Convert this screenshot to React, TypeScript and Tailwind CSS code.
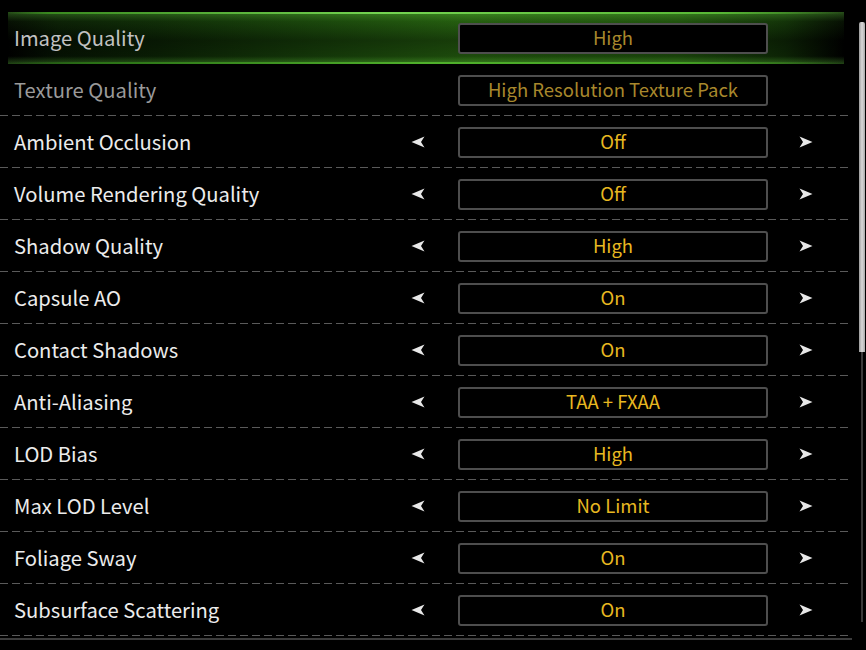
import React from 'react';

type Row = { label: string; value: string; locked?: boolean };

const rows: Row[] = [
  { label: 'Image Quality', value: 'High', locked: true },
  { label: 'Texture Quality', value: 'High Resolution Texture Pack', locked: true },
  { label: 'Ambient Occlusion', value: 'Off' },
  { label: 'Volume Rendering Quality', value: 'Off' },
  { label: 'Shadow Quality', value: 'High' },
  { label: 'Capsule AO', value: 'On' },
  { label: 'Contact Shadows', value: 'On' },
  { label: 'Anti-Aliasing', value: 'TAA + FXAA' },
  { label: 'LOD Bias', value: 'High' },
  { label: 'Max LOD Level', value: 'No Limit' },
  { label: 'Foliage Sway', value: 'On' },
  { label: 'Subsurface Scattering', value: 'On' },
];

function Arrow({ dir }: { dir: 'left' | 'right' }) {
  return (
    <svg width="14" height="12" viewBox="0 0 14 12" className={dir === 'left' ? 'rotate-180' : ''}>
      <path d="M0.5 0.5 L13.5 6 L0.5 11.5 L4 6 Z" fill="#e8e8e8" />
    </svg>
  );
}

function SettingRow({ row, selected }: { row: Row; selected: boolean }) {
  return (
    <div className="relative h-[52px]">
      {selected && (
        <div className="absolute inset-x-[8px] top-0 bottom-0 bg-[linear-gradient(90deg,#000_0%,#061403_6%,#0b2205_18%,#17400a_38%,#22580e_55%,#1d4c0c_80%,#0e2806_93%,#000_100%)]">
          <div className="absolute inset-0 bg-[linear-gradient(180deg,rgba(110,220,70,0.35)_0%,rgba(60,140,30,0.12)_18%,rgba(0,0,0,0.3)_55%,rgba(0,0,0,0.15)_85%,rgba(110,220,70,0.3)_100%)]" />
          <div className="absolute inset-x-0 top-0 h-[2px] bg-[linear-gradient(90deg,transparent_0%,#3a8a20_5%,#74d452_45%,#58b836_85%,transparent_100%)]" />
          <div className="absolute inset-x-0 bottom-0 h-[2px] bg-[linear-gradient(90deg,transparent_0%,#2a7016_10%,#50b02c_50%,#44a024_80%,transparent_100%)]" />
        </div>
      )}
      <div className="relative flex h-full items-center">
        <div
          className={
            'w-[398px] pl-[14px] text-[20.2px] ' +
            (row.locked ? (selected ? 'text-[#c2c2c2]' : 'text-[#9a9a9a]') : 'text-[#ececec]')
          }
        >
          {row.label}
        </div>
        <div className="flex w-[40px] justify-center">{!row.locked && <Arrow dir="left" />}</div>
        <div className="ml-[20px] flex h-[31px] w-[310px] items-center justify-center rounded-[3px] border-2 border-[#4e4e4e] bg-black">
          <span
            className={
              'text-[18.5px] ' + (row.locked ? 'text-[#a8882c]' : 'text-[#e8b820]')
            }
          >
            {row.value}
          </span>
        </div>
        <div className="flex w-[76px] justify-center">{!row.locked && <Arrow dir="right" />}</div>
      </div>
      {!selected && (
        <div className="absolute bottom-0 left-0 right-0 h-px bg-[repeating-linear-gradient(90deg,#5a5a5a_0_8px,transparent_8px_12px)]" />
      )}
    </div>
  );
}

export default function App() {
  return (
    <div
      className="relative h-[650px] w-[866px] overflow-hidden bg-black"
      style={{ fontFamily: '"Noto Sans CJK JP", "Noto Sans", sans-serif' }}
    >
      <div className="flex">
        <div className="w-[852px] pt-[12px]">
          {rows.map((r, i) => (
            <SettingRow key={r.label} row={r} selected={i === 0} />
          ))}
          <div className="mt-[2px] h-[2px] bg-[#3c3c3c]" />
        </div>
        <div className="relative ml-[6px] w-[8px] pt-[22px]">
          <div className="absolute left-[3px] top-[22px] h-[600px] w-[2px] bg-[#3a3a3a]" />
          <div className="relative ml-[1px] h-[330px] w-[6px] rounded-t-[2px] bg-[linear-gradient(90deg,#9a9a9a,#d8d8d8_50%,#a8a8a8)]" />
        </div>
      </div>
    </div>
  );
}
